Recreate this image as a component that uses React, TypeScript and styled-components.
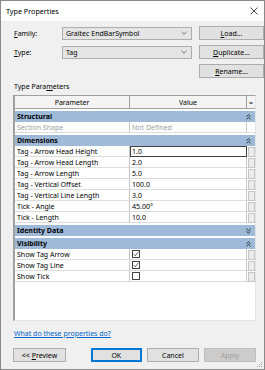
import React from "react";
import styled, { createGlobalStyle, css } from "styled-components";

const GlobalStyle = createGlobalStyle`
  html, body {
    margin: 0;
    padding: 0;
    background: #ffffff;
  }
  body {
    font-family: "Noto Sans", "Open Sans", sans-serif;
    font-size: 7px;
    color: #000000;
  }
  * {
    box-sizing: border-box;
  }
`;

const Window = styled.div`
  width: 265px;
  height: 370px;
  border: 1px solid #8a8a8a;
  background: #f0f0f0;
  display: flex;
  flex-direction: column;
  position: relative;
  overflow: hidden;
`;

const TitleBar = styled.div`
  height: 20px;
  background: #ffffff;
  display: flex;
  align-items: center;
  justify-content: space-between;
  padding: 0 6px 1px 5px;
  font-size: 7.2px;
`;

const CloseGlyph = styled.svg`
  width: 8px;
  height: 8px;
`;

const Body = styled.div`
  flex: 1;
  display: flex;
  flex-direction: column;
  padding: 5px 8px 0 12px;
`;

const TopGrid = styled.div`
  display: grid;
  grid-template-columns: 42px 130px 65px;
  column-gap: 7px;
  grid-auto-rows: 14px;
  row-gap: 5px;
  align-items: center;
`;

const Label = styled.div`
  padding-left: 1px;
`;

const Combo = styled.div`
  height: 13px;
  background: #e5e5e5;
  border: 1px solid #adadad;
  display: flex;
  align-items: center;
  justify-content: space-between;
  padding: 0 4px 0 3px;
`;

const ComboArrow = styled.svg`
  width: 6px;
  height: 4px;
`;

const Button = styled.div<{ $primary?: boolean; $disabled?: boolean }>`
  height: 14px;
  background: #e1e1e1;
  border: 1px solid #adadad;
  display: flex;
  align-items: center;
  justify-content: center;
  white-space: pre;
  ${(p) =>
    p.$primary &&
    css`
      border-color: #0078d7;
      box-shadow: inset 0 0 0 1px #0078d7;
    `}
  ${(p) =>
    p.$disabled &&
    css`
      background: #cccccc;
      border-color: #bfbfbf;
      color: #a0a0a0;
    `}
`;

const SectionLabel = styled.div`
  margin-top: 4px;
  height: 10px;
  line-height: 10px;
  padding-left: 1px;
`;

const Grid = styled.div`
  margin-top: 3px;
  height: 226px;
  background: #ffffff;
  border-top: 1px solid #a0a0a0;
  border-left: 2px solid #a0a0a0;
  border-right: 1px solid #e3e3e3;
  border-bottom: 1px solid #e3e3e3;
  display: flex;
  flex-direction: column;
`;

const HeaderRow = styled.div`
  height: 13px;
  display: grid;
  grid-template-columns: 115px 117px 1fr;
  background: #f0f0f0;
`;

const HeaderCell = styled.div`
  display: flex;
  align-items: center;
  justify-content: center;
  border-right: 1px solid #a0a0a0;
  border-bottom: 1px solid #a0a0a0;
  background: #f4f4f4;
  &:last-child {
    border-right: none;
  }
`;

const GroupRow = styled.div`
  margin-top: 2px;
  height: 11px;
  background: #9fbad8;
  display: flex;
  align-items: center;
  justify-content: space-between;
  padding: 0 4px 0 2px;
  font-weight: 700;
`;

const Chevrons = styled.svg`
  width: 5px;
  height: 6px;
`;

const DataRow = styled.div<{ $muted?: boolean }>`
  height: 11px;
  display: grid;
  grid-template-columns: 115px 117px 1fr;
  color: ${(p) => (p.$muted ? "#a0a0a0" : "#000000")};
`;

const NameCell = styled.div`
  display: flex;
  align-items: center;
  padding-left: 2px;
  border-right: 1px solid #c8c8c8;
  border-bottom: 1px solid #dcdcdc;
  white-space: nowrap;
  overflow: hidden;
`;

const ValueCell = styled.div<{ $editing?: boolean }>`
  display: flex;
  align-items: center;
  padding-left: 2px;
  border-right: 1px solid #c8c8c8;
  border-bottom: 1px solid #dcdcdc;
  ${(p) =>
    p.$editing &&
    css`
      border: 1px solid #404040;
      padding-left: 1px;
    `}
`;

const ExtraCell = styled.div<{ $plain?: boolean }>`
  border-bottom: 1px solid #dcdcdc;
  display: flex;
  justify-content: center;
  padding: 1px 1px;
  &::after {
    content: "";
    width: 5px;
    height: 100%;
    background: ${(p) => (p.$plain ? "transparent" : "#ececec")};
    border: 1px solid ${(p) => (p.$plain ? "transparent" : "#c4c4c4")};
  }
`;

const CheckBox = styled.svg`
  width: 8px;
  height: 8px;
`;

const LinkText = styled.div`
  margin-top: 8px;
  color: #0066cc;
  text-decoration: underline;
  padding-left: 1px;
`;

const Footer = styled.div`
  margin-top: 10px;
  display: flex;
  gap: 5px;
`;

const FooterButton = styled(Button)<{ $w: number }>`
  width: ${(p) => p.$w}px;
`;

const Spacer = styled.div`
  width: 15px;
`;

const Grip = styled.svg`
  position: absolute;
  right: 1px;
  bottom: 1px;
  width: 6px;
  height: 6px;
`;

const ChevronIcon: React.FC<{ down?: boolean }> = ({ down }) => (
  <Chevrons viewBox="0 0 5 6">
    <g
      fill="none"
      stroke="#222"
      strokeWidth="0.9"
      transform={down ? "rotate(180 2.5 3)" : undefined}
    >
      <polyline points="0.5,2.6 2.5,0.8 4.5,2.6" />
      <polyline points="0.5,5.2 2.5,3.4 4.5,5.2" />
    </g>
  </Chevrons>
);

const Check: React.FC<{ checked: boolean }> = ({ checked }) => (
  <CheckBox viewBox="0 0 8 8">
    <rect x="0.5" y="0.5" width="7" height="7" fill="#fff" stroke="#444" />
    {checked && (
      <polyline
        points="1.6,4.2 3.2,5.8 6.4,1.8"
        fill="none"
        stroke="#555"
        strokeWidth="0.9"
      />
    )}
  </CheckBox>
);

interface Param {
  name: string;
  value?: string;
  check?: boolean;
}

const dimensions: Param[] = [
  { name: "Tag - Arrow Head Height", value: "1.0" },
  { name: "Tag - Arrow Head Length", value: "2.0" },
  { name: "Tag - Arrow Length", value: "5.0" },
  { name: "Tag - Vertical Offset", value: "100.0" },
  { name: "Tag - Vertical Line Length", value: "3.0" },
  { name: "Tick - Angle", value: "45.00°" },
  { name: "Tick - Length", value: "10.0" },
];

const visibility: Param[] = [
  { name: "Show Tag Arrow", check: true },
  { name: "Show Tag Line", check: true },
  { name: "Show Tick", check: false },
];

const ParamRow: React.FC<{ param: Param; editing?: boolean }> = ({
  param,
  editing,
}) => (
  <DataRow>
    <NameCell>{param.name}</NameCell>
    <ValueCell $editing={editing}>
      {param.check === undefined ? param.value : <Check checked={param.check} />}
    </ValueCell>
    <ExtraCell />
  </DataRow>
);

const App: React.FC = () => {
  return (
    <>
      <GlobalStyle />
      <Window>
        <TitleBar>
          <span>Type Properties</span>
          <CloseGlyph viewBox="0 0 8 8">
            <path d="M0.5 0.5 L7.5 7.5 M7.5 0.5 L0.5 7.5" stroke="#222" strokeWidth="0.8" />
          </CloseGlyph>
        </TitleBar>
        <Body>
          <TopGrid>
            <Label>
              <u>F</u>amily:
            </Label>
            <Combo>
              <span>Graitec EndBarSymbol</span>
              <ComboArrow viewBox="0 0 6 4">
                <polyline points="0.5,0.8 3,3.2 5.5,0.8" fill="none" stroke="#555" strokeWidth="0.8" />
              </ComboArrow>
            </Combo>
            <Button>
              <u>L</u>oad...
            </Button>
            <Label>
              <u>T</u>ype:
            </Label>
            <Combo>
              <span>Tag</span>
              <ComboArrow viewBox="0 0 6 4">
                <polyline points="0.5,0.8 3,3.2 5.5,0.8" fill="none" stroke="#555" strokeWidth="0.8" />
              </ComboArrow>
            </Combo>
            <Button>
              <u>D</u>uplicate...
            </Button>
            <span />
            <span />
            <Button>
              <u>R</u>ename...
            </Button>
          </TopGrid>

          <SectionLabel>
            Type Para<u>m</u>eters
          </SectionLabel>

          <Grid>
            <HeaderRow>
              <HeaderCell>Parameter</HeaderCell>
              <HeaderCell>Value</HeaderCell>
              <HeaderCell>=</HeaderCell>
            </HeaderRow>

            <GroupRow>
              <span>Structural</span>
              <ChevronIcon />
            </GroupRow>
            <DataRow $muted>
              <NameCell>Section Shape</NameCell>
              <ValueCell>Not Defined</ValueCell>
              <ExtraCell $plain />
            </DataRow>

            <GroupRow>
              <span>Dimensions</span>
              <ChevronIcon />
            </GroupRow>
            {dimensions.map((p, i) => (
              <ParamRow key={p.name} param={p} editing={i === 0} />
            ))}

            <GroupRow>
              <span>Identity Data</span>
              <ChevronIcon down />
            </GroupRow>

            <GroupRow>
              <span>Visibility</span>
              <ChevronIcon />
            </GroupRow>
            {visibility.map((p) => (
              <ParamRow key={p.name} param={p} />
            ))}
          </Grid>

          <LinkText>What do these properties do?</LinkText>

          <Footer>
            <FooterButton $w={54}>
              {"<< "}
              <u>P</u>review
            </FooterButton>
            <Spacer />
            <FooterButton $w={52} $primary>
              OK
            </FooterButton>
            <FooterButton $w={53}>Cancel</FooterButton>
            <FooterButton $w={53} $disabled>
              Apply
            </FooterButton>
          </Footer>
        </Body>
        <Grip viewBox="0 0 6 6">
          <g fill="#a0a0a0">
            <rect x="4" y="0" width="1" height="1" />
            <rect x="2" y="2" width="1" height="1" />
            <rect x="4" y="2" width="1" height="1" />
            <rect x="0" y="4" width="1" height="1" />
            <rect x="2" y="4" width="1" height="1" />
            <rect x="4" y="4" width="1" height="1" />
          </g>
        </Grip>
      </Window>
    </>
  );
};

export default App;
